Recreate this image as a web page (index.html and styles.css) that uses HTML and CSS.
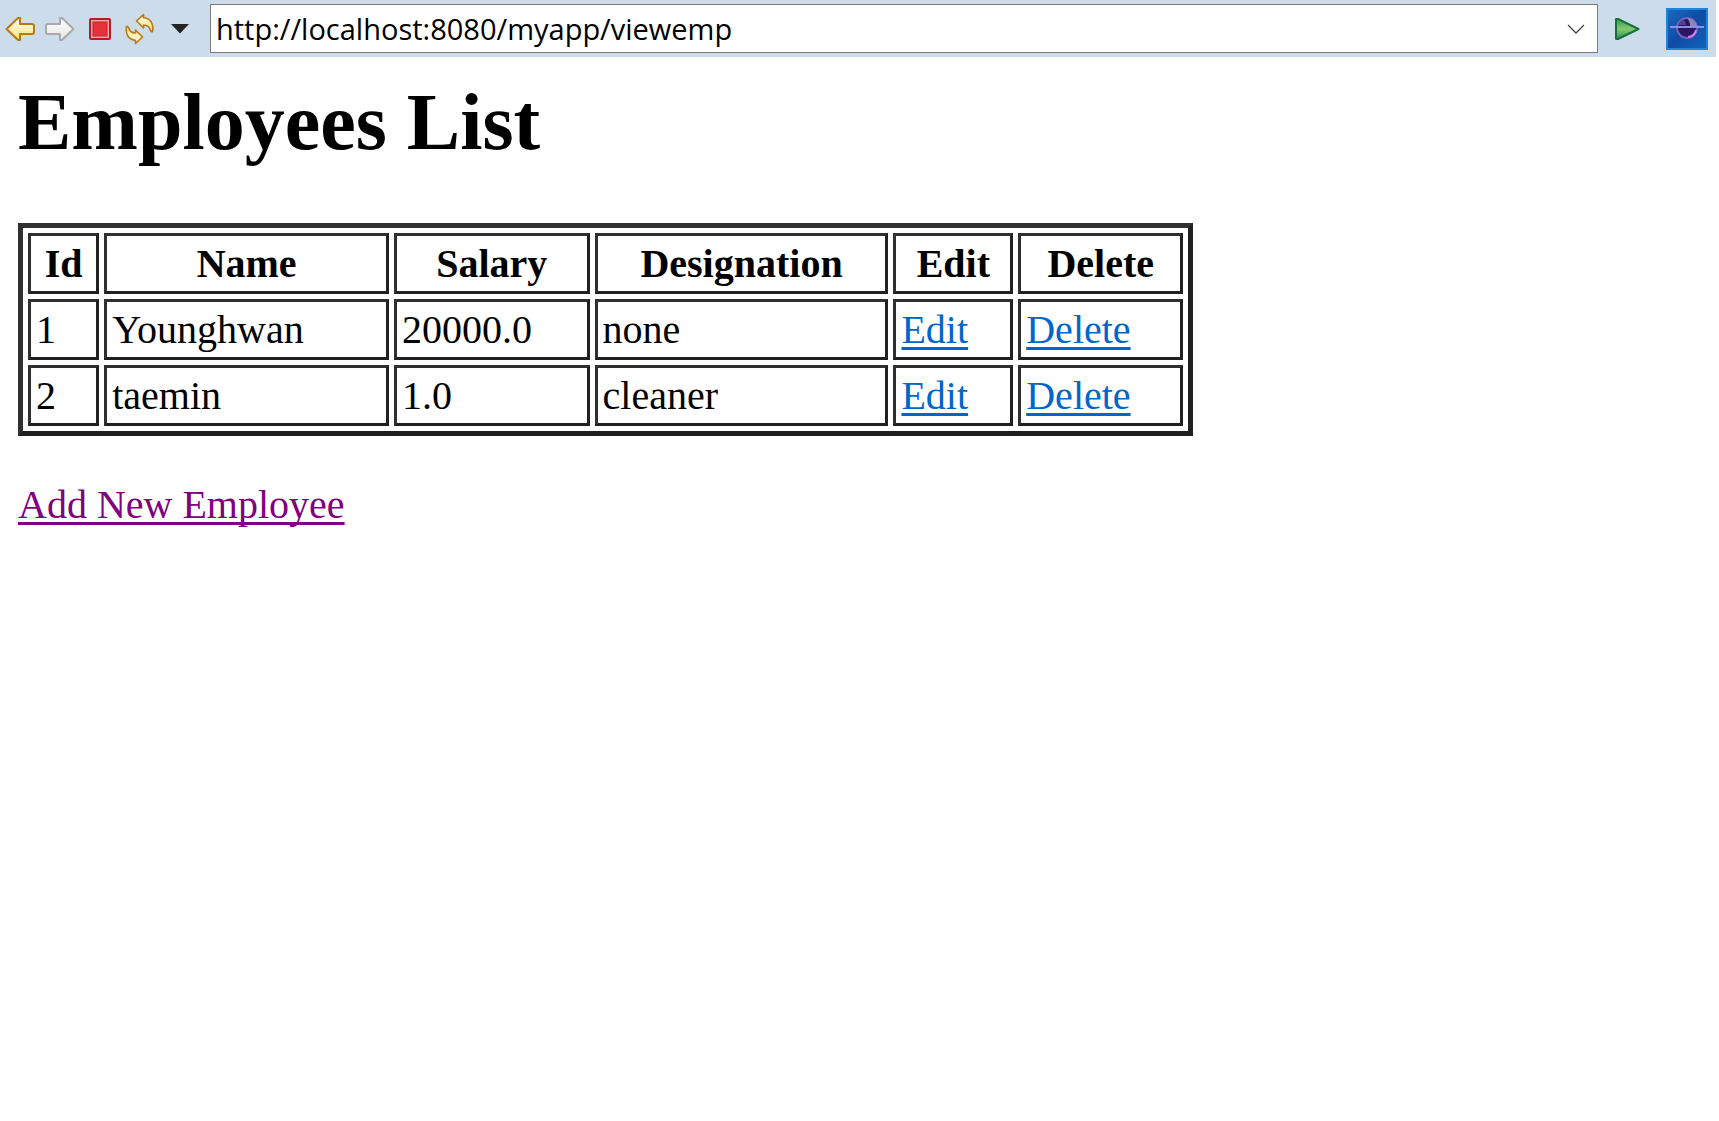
FILE: index.html
```html
<!DOCTYPE html>
<html lang="en">
<head>
<meta charset="utf-8">
<title>Employees List</title>
<link rel="stylesheet" href="styles.css">
</head>
<body>
<header class="toolbar">
  <button class="tool" type="button" aria-label="Back">
    <svg width="30" height="26" viewBox="0 0 30 26"><defs><linearGradient id="gold" x2="0" y2="1"><stop offset="0" stop-color="#fffdf0"/><stop offset="1" stop-color="#ffdf80"/></linearGradient></defs><path d="M1.500 13L13 2H15V8H27Q29 8 29 10V16Q29 18 27 18H15V24H13Z" fill="url(#gold)" stroke="#b87810" stroke-width="2" stroke-linejoin="round"/></svg>
  </button>
  <button class="tool" type="button" aria-label="Forward">
    <svg width="30" height="26" viewBox="0 0 30 26"><defs><linearGradient id="silver" x2="0" y2="1"><stop offset="0" stop-color="#fff"/><stop offset="1" stop-color="#e6e6e6"/></linearGradient></defs><path d="M28.500 13L17 2H15V8H3Q1 8 1 10V16Q1 18 3 18H15V24H17Z" fill="url(#silver)" stroke="#a9a9a9" stroke-width="2" stroke-linejoin="round"/></svg>
  </button>
  <button class="tool" type="button" aria-label="Stop">
    <svg width="22" height="22" viewBox="0 0 22 22"><rect x="1" y="1" width="20" height="20" rx="1" fill="#f2a3a6" stroke="#b81a26" stroke-width="2"/><rect x="4" y="4" width="14" height="14" fill="#e8303a" stroke="#c8202b"/></svg>
  </button>
  <button class="tool" type="button" aria-label="Refresh">
    <svg width="30" height="32" viewBox="0 0 30 32"><g fill="url(#gold)" stroke="#b97a12" stroke-width="1.600" stroke-linejoin="round"><path id="turn" d="M11.500 8L18.500 1.500V4.800C25 5 29 10.500 27.500 18.500Q26.500 19 25.500 17.500C24.500 13.500 22.500 12 18.500 12V15Z"/><use href="#turn" transform="rotate(180 14.500 16)"/></g></svg>
  </button>
  <button class="tool" type="button" aria-label="History">
    <svg width="18" height="10" viewBox="0 0 18 10"><path d="M0 0H18L9 9.500Z" fill="#242424"/></svg>
  </button>
  <div class="address">
    <input class="address-input" type="text" aria-label="Address" value="http://localhost:8080/myapp/viewemp">
    <button class="address-open" type="button" aria-label="Show addresses">
      <svg width="18" height="10" viewBox="0 0 18 10"><path d="M1 1L9 9L17 1" fill="none" stroke="#444" stroke-width="1.300"/></svg>
    </button>
  </div>
  <button class="tool" type="button" aria-label="Go">
    <svg width="26" height="24" viewBox="0 0 26 24"><defs><linearGradient id="go" x2="0" y2="1"><stop offset="0" stop-color="#3d9b50"/><stop offset=".5" stop-color="#86c96d"/><stop offset="1" stop-color="#2f9257"/></linearGradient></defs><path d="M2 2H4L24.500 12L4 22H2Z" fill="url(#go)" stroke="#17703f" stroke-width="2" stroke-linejoin="round"/></svg>
  </button>
  <svg class="logo" width="42" height="42" viewBox="0 0 42 42"><defs><linearGradient id="sky" x2="1" y2="1"><stop offset="0" stop-color="#1a6cc2"/><stop offset=".5" stop-color="#0f4ba3"/><stop offset="1" stop-color="#1263bd"/></linearGradient></defs><rect x="1" y="1" width="40" height="40" fill="url(#sky)" stroke="#1b86dc" stroke-width="2"/><circle cx="21" cy="20" r="10" fill="#2c1660" stroke="#6f62bd" stroke-width="2"/><path d="M21 10A10 10 0 0 1 31 18H24Q24 13 21 10Z" fill="#8f86b8"/><path d="M14 13Q19 10 20 17H13Z" fill="#54409a"/><path d="M22 29Q29 28 30 22" fill="none" stroke="#d67be6" stroke-width="2"/><rect x="4" y="18" width="34" height="2" fill="#8b8fe6"/></svg>
</header>
<main class="page">
  <h1 class="title">Employees List</h1>
  <table class="employees">
    <colgroup><col class="col-id"><col class="col-name"><col class="col-salary"><col class="col-designation"><col class="col-edit"><col class="col-delete"></colgroup>
    <thead>
      <tr><th>Id</th><th>Name</th><th>Salary</th><th>Designation</th><th>Edit</th><th>Delete</th></tr>
    </thead>
    <tbody>
      <tr><td>1</td><td>Younghwan</td><td>20000.0</td><td>none</td><td><a class="link" href="#edit-1">Edit</a></td><td><a class="link" href="#delete-1">Delete</a></td></tr>
      <tr><td>2</td><td>taemin</td><td>1.0</td><td>cleaner</td><td><a class="link" href="#edit-2">Edit</a></td><td><a class="link" href="#delete-2">Delete</a></td></tr>
    </tbody>
  </table>
  <a class="link seen" href="#add">Add New Employee</a>
</main>
</body>
</html>
```
FILE: styles.css
```css
* { box-sizing: border-box; }
body { margin: 0; background: #fff; color: #000; font-family: "Liberation Serif", "Times New Roman", serif; font-size: 40px; line-height: 47px; }
button { padding: 0; border: 0; background: none; }
svg { display: block; }
.toolbar { display: flex; align-items: center; height: 57px; margin-right: 3px; padding-right: 8px; background: #cddceb; }
.tool { display: flex; align-items: center; justify-content: center; width: 40px; height: 40px; }
.address { display: flex; flex: 1; align-items: center; height: 49px; margin: 0 9px 0 10px; padding-right: 12px; border: 1px solid #7a7a7a; background: #fff; }
.address-input { flex: 1; min-width: 0; height: 47px; padding: 0 5px; border: 0; outline: 0; background: none; color: #000; font: 29px "Open Sans", sans-serif; }
.logo { margin-left: 19px; }
.page { padding: 19px 22px 18px 18px; }
.title { margin: 0 0 55px; font-size: 80px; line-height: 92px; }
.employees { width: 70%; margin-bottom: 45px; table-layout: fixed; border: 5px solid; border-color: #303030 #202020 #202020 #303030; border-spacing: 5px; }
.employees th, .employees td { padding: 4px 5px; border: 3px solid; border-color: #303030 #202020 #202020 #303030; }
.col-id { width: 6.3%; }
.col-name { width: 25.2%; }
.col-salary { width: 17.3%; }
.col-designation { width: 26%; }
.col-edit { width: 10.6%; }
.col-delete { width: 14.6%; }
.link { color: #06c; text-decoration: underline 3px; text-decoration-skip-ink: none; text-underline-offset: 4px; }
.seen { color: purple; }
```
